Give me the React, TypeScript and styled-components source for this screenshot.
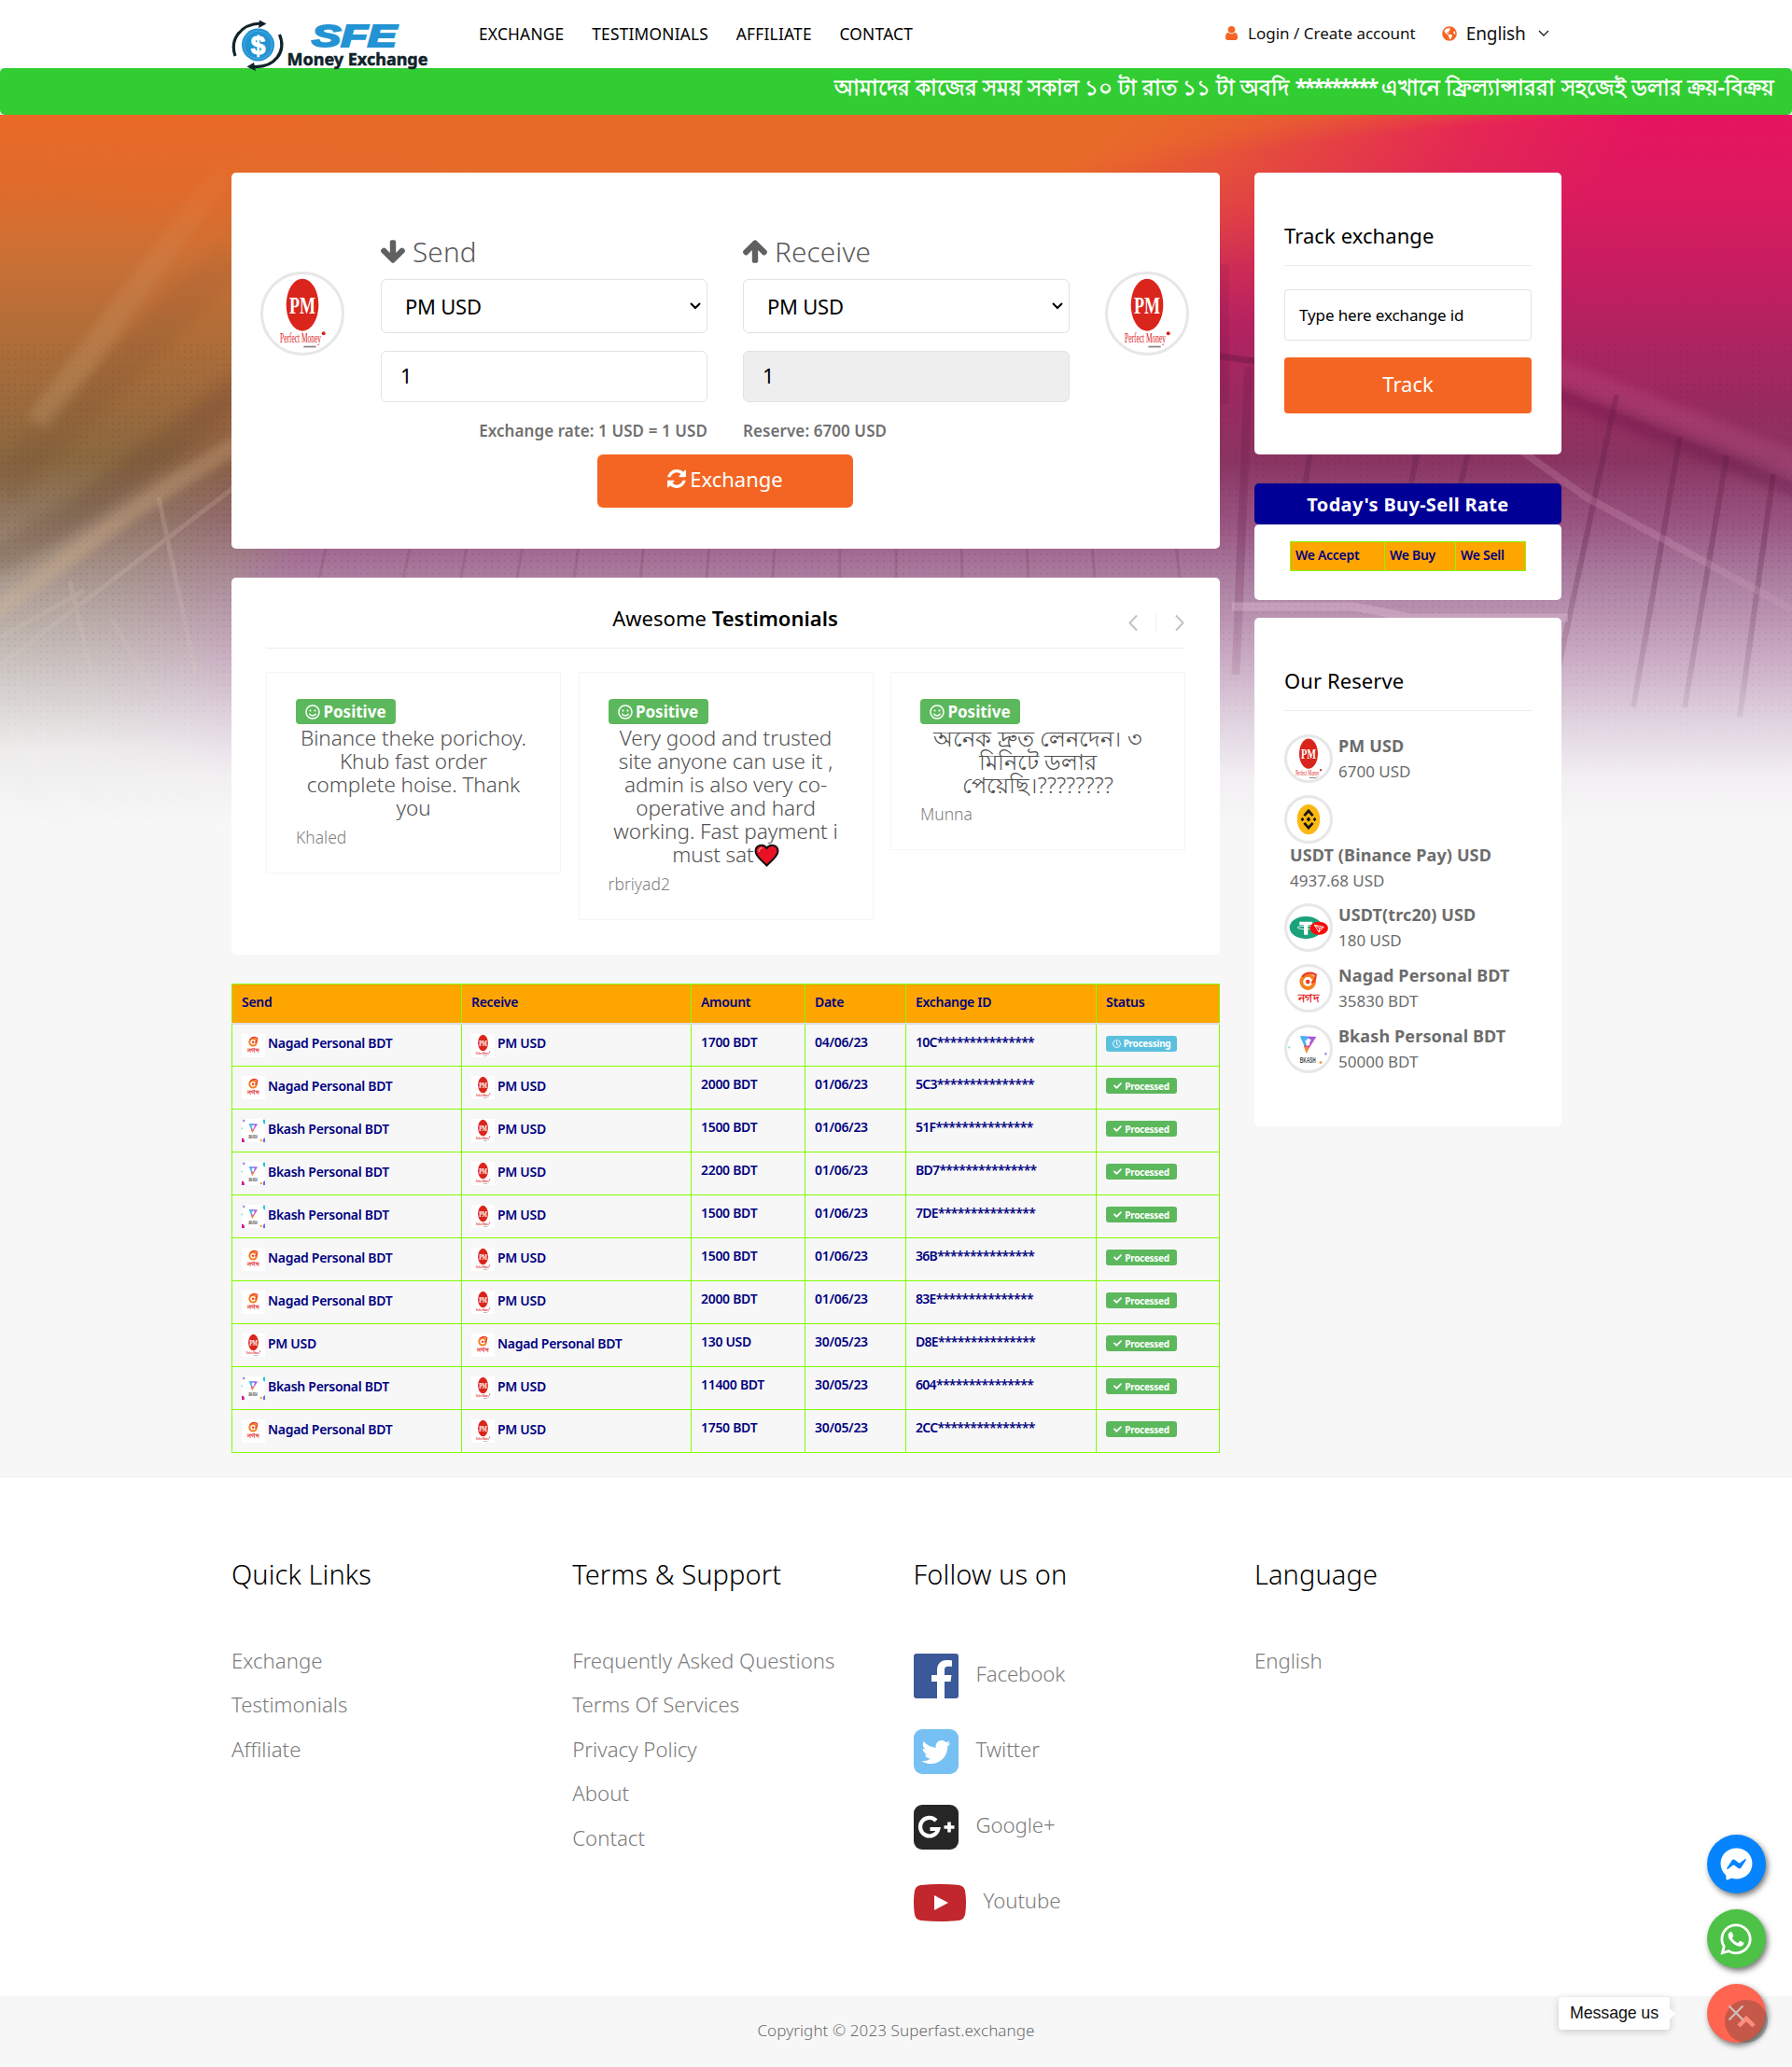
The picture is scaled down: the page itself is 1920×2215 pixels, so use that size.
import React from 'react';
import styled, { createGlobalStyle, css } from 'styled-components';
import { FaCheck, FaFacebookMessenger, FaRegClock, FaRegSmile, FaTwitter, FaWhatsapp, FaGlobeAmericas } from 'react-icons/fa';

const Global = createGlobalStyle`
  *, *::before, *::after { box-sizing: border-box; }
  body { margin: 0; background: #f7f7f7; font-family: "Noto Sans", "Open Sans", sans-serif; color: #6c6c6c; }
  a { color: inherit; text-decoration: none; }
  ul { list-style: none; margin: 0; padding: 0; }
  h2, h3, p { margin: 0; font-weight: inherit; }
  svg { overflow: visible; }
`;

const orange = '#f46523';

/* ---------- page frame ---------- */

const Page = styled.div`
  position: relative;
  width: 1920px;
  height: 2215px;
  overflow: hidden;
  display: flex;
  flex-direction: column;
`;

const Container = styled.div`
  width: 1424px;
  margin-left: 248px;
`;

/* ---------- header ---------- */

const Header = styled.header`
  height: 73px;
  background: #fff;
  position: relative;
  z-index: 2;
`;

const HeaderRow = styled(Container)`
  display: flex;
  align-items: flex-start;
`;

const LogoLink = styled.a`
  width: 265px;
  padding-top: 19px;
  svg { display: block; }
`;

const Nav = styled.nav`
  display: flex;
  gap: 29.7px;
  padding-top: 25px;
  width: 800px;
  font-size: 17.3px;
  line-height: 24px;
  letter-spacing: 0.25px;
  color: #000;
`;

const Account = styled.div`
  display: flex;
  align-items: center;
  padding-top: 23px;
  height: 48px;
  font-size: 17px;
  letter-spacing: 0;
  color: #111;
  white-space: nowrap;
  svg { flex: none; }
`;

const AccountText = styled.span`
  margin: 0 28px 0 11px;
  line-height: 24px;
`;

const Lang = styled.span`
  font-size: 19px;
  line-height: 24px;
  margin: 0 13px 0 10px;
  letter-spacing: -0.1px;
`;

const Ticker = styled.div`
  height: 50px;
  background: #32cd32;
  border-radius: 5px;
  display: flex;
  justify-content: flex-end;
  padding: 2px 19px 0 0;
  color: #fff;
  font-weight: 700;
  font-size: 23.2px;
  line-height: 37px;
  white-space: pre;
  position: relative;
`;

const Stars = styled.span`
  letter-spacing: -2.9px;
  margin-right: 0;
`;

/* ---------- hero backdrop ---------- */

const Main = styled.main`
  position: relative;
  height: 1460px;
  border-bottom: 1px solid #ececec;
`;

const Backdrop = styled.div`
  position: absolute;
  inset: 0 0 auto 0;
  height: 770px;
  background: linear-gradient(180deg, #ea6a28 0, #df6b2b 80px, #cb7035 150px, #a66c3a 270px, #8a6840 370px, #8f7861 430px, #aea096 510px, #d3cecb 610px, #eeedec 680px, #f7f7f7 760px);
`;

const Pink = styled.div`
  position: absolute;
  inset: 0;
  background: linear-gradient(180deg, #e6145f 0, #db1a5f 90px, #bf1f60 190px, #9b2a60 300px, #8a3462 370px, #9a5683 440px, #a97a9d 490px, #c6a5bf 570px, #e0d3e0 650px, #f2eff2 710px, #f7f7f7 760px);
  mask-image: radial-gradient(ellipse 1700px 674px at 1900px 650px, #000 96.5%, rgba(0, 0, 0, 0.5) 100%, rgba(0, 0, 0, 0.15) 106%, transparent 113%);
`;

const Glow = styled.div`
  position: absolute;
  inset: 0;
  background: radial-gradient(ellipse 880px 260px at 880px 0, #e86a29 36%, rgba(232, 106, 41, 0.6) 58%, rgba(232, 106, 41, 0.2) 80%, rgba(232, 106, 41, 0) 100%);
`;

const Texture = styled.svg`
  position: absolute;
  inset: 0;
`;

/* ---------- columns & cards ---------- */

const Columns = styled(Container)`
  position: relative;
  display: flex;
  gap: 37px;
  padding-top: 62px;
`;

const LeftCol = styled.div`
  width: 1059px;
  flex: none;
`;

const RightCol = styled.aside`
  width: 329px;
  margin-right: -1px;
  flex: none;
`;

const Card = styled.section<{ h: number; mb: number; pad?: string }>`
  height: ${p => p.h}px;
  margin-bottom: ${p => p.mb}px;
  padding: ${p => p.pad || '0'};
  background: #fff;
  border-radius: 5px;
`;

/* ---------- exchange form ---------- */

const ExchangeGrid = styled.div`
  display: grid;
  grid-template-columns: 129px 388px 388px 90px;
  margin-left: 31px;
  padding-top: 68px;
`;

const Ring = styled.div<{ d: number }>`
  width: ${p => p.d}px;
  height: ${p => p.d}px;
  border: 3px solid #e7e7e7;
  border-radius: 50%;
  display: flex;
  align-items: center;
  justify-content: center;
  background: #fff;
  flex: none;
`;

const RingCell = styled.div`
  padding-top: 38px;
`;

const FieldCol = styled.div`
  width: 350px;
`;

const FieldTitle = styled.h2`
  display: flex;
  align-items: center;
  gap: 8px;
  height: 46px;
  padding-bottom: 14px;
  font-size: 29.7px;
  font-weight: 300;
  letter-spacing: 0.15px;
  color: #5a5a5a;
`;

const boxed = css`
  width: 100%;
  display: flex;
  align-items: center;
  border: 1px solid #e2e2e2;
  border-radius: 6px;
  color: #000;
`;

const SelectBox = styled.div`
  ${boxed}
  height: 58px;
  padding: 0 6px 0 25px;
  justify-content: space-between;
  font-size: 22px;
  letter-spacing: -0.25px;
  margin-bottom: 19px;
`;

const AmountBox = styled.div<{ muted?: boolean }>`
  ${boxed}
  height: 55px;
  padding: 0 0 3px 20px;
  font-size: 22px;
  background: ${p => (p.muted ? '#eee' : '#fff')};
`;

const RateText = styled.p<{ right?: boolean }>`
  margin-top: 18px;
  line-height: 26px;
  font-size: 17px;
  font-weight: 600;
  letter-spacing: 0.08px;
  text-align: ${p => (p.right ? 'right' : 'left')};
  color: #707070;
`;

const Button = styled.button`
  display: flex;
  align-items: center;
  justify-content: center;
  gap: 4px;
  border: 0;
  padding: 0 0 5px;
  border-radius: 6px;
  background: ${orange};
  color: #fff;
  font-family: inherit;
  font-size: 22px;
`;

const ExchangeButton = styled(Button)`
  width: 274px;
  height: 57px;
  margin: 12px auto 0 392px;
`;

/* ---------- testimonials ---------- */

const TestiHead = styled.div`
  position: relative;
  height: 76px;
  margin: 0 38px 0 37px;
  border-bottom: 1px solid #ececec;
  padding-top: 28px;
  text-align: center;
  font-size: 22px;
  line-height: 30px;
  letter-spacing: 0.03px;
  color: #000;
  b { font-weight: 600; }
`;

const Arrows = styled.div`
  position: absolute;
  right: 0;
  top: 39px;
  svg { display: block; }
`;

const TestiRow = styled.div`
  display: grid;
  grid-template-columns: 316px 316px 316px;
  column-gap: 18.5px;
  align-items: start;
  margin: 25px 0 0 37px;
`;

const TestiCard = styled.article`
  border: 1px solid #f5f5f5;
  padding: 28px 31px 25px;
`;

const Badge = styled.span<{ tone?: string; small?: boolean }>`
  display: inline-flex;
  align-items: center;
  justify-content: center;
  gap: 3px;
  width: ${p => (p.small ? 76 : 107)}px;
  height: ${p => (p.small ? 17 : 27)}px;
  margin-top: ${p => (p.small ? 3 : 0)}px;
  border-radius: ${p => (p.small ? 3 : 4)}px;
  background: ${p => p.tone || '#5cb85c'};
  color: #fff;
  font-weight: 700;
  font-size: ${p => (p.small ? 10 : 17)}px;
  vertical-align: top;
`;

const Quote = styled.p<{ bengali?: boolean }>`
  margin: 2px -10px 0;
  text-align: center;
  font-size: ${p => (p.bengali ? 24 : 22.5)}px;
  line-height: 25px;
  font-weight: 300;
  letter-spacing: ${p => (p.bengali ? 0 : -0.05)}px;
  color: #525252;
  white-space: nowrap;
  span { display: block; height: 25px; }
  svg { vertical-align: -5px; }
`;

const Author = styled.p`
  margin-top: 6px;
  line-height: 26px;
  font-size: 17.5px;
  font-weight: 300;
  color: #808080;
`;

/* ---------- exchanges table ---------- */

const Table = styled.table`
  width: 1059px;
  border-collapse: collapse;
  table-layout: fixed;
  color: navy;
  font-size: 14px;
  font-weight: 600;
  letter-spacing: -0.3px;
  line-height: 20px;
  td, th { border: 1px solid #7fff00; padding: 0 10px; text-align: left; vertical-align: top; font-weight: 600; }
  th { background: orange; height: 42px; padding-top: 9px; border-bottom: 2px solid #ddd; }
  td { height: 46px; padding-top: 9px; }
`;

const Coin = styled.div`
  display: flex;
  align-items: center;
  gap: 3px;
  height: 25px;
  margin-top: 1px;
  padding-bottom: 4px;
  svg { position: relative; top: 2px; flex: none; }
`;

const Id = styled.span`
  letter-spacing: -0.7px;
`;

/* ---------- sidebar ---------- */

const SideTitle = styled.h3<{ h: number }>`
  height: ${p => p.h}px;
  border-bottom: 1px solid #ececec;
  font-size: 22px;
  line-height: 30px;
  letter-spacing: 0.08px;
  color: #000;
`;

const TrackInput = styled.div`
  ${boxed}
  height: 55px;
  margin: 25px 0 18px;
  border-radius: 4px;
  padding: 0 0 1px 15px;
  font-size: 17px;
  letter-spacing: -0.12px;
`;

const TrackButton = styled(Button)`
  width: 265px;
  height: 60px;
  border-radius: 4px;
`;

const RateHeader = styled.div`
  height: 44px;
  border-radius: 5px;
  background: #000096;
  color: #fff;
  text-align: center;
  font-size: 20px;
  line-height: 46px;
  font-weight: 700;
  letter-spacing: 0.33px;
`;

const RateTable = styled.div`
  display: grid;
  grid-template-columns: 101px 76px 1fr;
  width: 253px;
  height: 32px;
  border: 1px solid #7fff00;
  background: orange;
  color: navy;
  font-size: 14px;
  font-weight: 600;
  letter-spacing: -0.3px;
  line-height: 28px;
  span { padding-left: 5px; border-right: 1px solid #7fff00; }
  span:last-child { border-right: 0; }
`;

const ReserveList = styled.ul`
  padding-top: 25px;
`;

const ReserveItem = styled.li<{ wrap?: boolean }>`
  display: flex;
  flex-wrap: ${p => (p.wrap ? 'wrap' : 'nowrap')};
  column-gap: 6px;
  margin-bottom: 13px;
  ${p => p.wrap && css`margin-bottom: 10px; height: 106px;`}
`;

const ReserveText = styled.div<{ wrap?: boolean }>`
  font-size: 17px;
  line-height: 27px;
  margin: ${p => (p.wrap ? '-2px 0 0 6px' : '-1px 0 -1px 0')};
  width: ${p => (p.wrap ? '100%' : 'auto')};
  white-space: nowrap;
  b { display: block; font-size: 18px; font-weight: 700; letter-spacing: 0.12px; }
`;

/* ---------- footer ---------- */

const Footer = styled.footer`
  height: 556px;
  background: #fff;
`;

const FooterGrid = styled(Container)`
  display: grid;
  grid-template-columns: repeat(4, 365.3px);
  padding-top: 84px;
  color: #7c7c7c;
  font-size: 22.2px;
  font-weight: 300;
`;

const FooterTitle = styled.h3`
  color: #000;
  font-size: 29px;
  font-weight: 300;
  letter-spacing: 0.1px;
  line-height: 40px;
  margin-bottom: 50px;
`;

const Links = styled.ul`
  li { height: 47.4px; line-height: 46px; white-space: nowrap; }
`;

const SocialList = styled.div`
  padding-top: 15px;
`;

const Social = styled.a`
  display: flex;
  align-items: center;
  gap: 19px;
  height: 48px;
  margin-bottom: 33px;
  span { padding-bottom: 5px; letter-spacing: -0.1px; }
`;

const Copyright = styled.div`
  height: 76px;
  line-height: 73px;
  text-align: center;
  font-size: 17px;
  font-weight: 300;
  letter-spacing: 0.1px;
  background: #f7f7f7;
`;

/* ---------- floating chat ---------- */

const Floating = styled.div`
  position: absolute;
  right: 28.5px;
  bottom: 26px;
  display: flex;
  flex-direction: column;
  gap: 17px;
`;

const Round = styled.div<{ tone: string }>`
  position: relative;
  width: 63px;
  height: 63px;
  border-radius: 50%;
  display: flex;
  align-items: center;
  justify-content: center;
  background: ${p => p.tone};
  color: #fff;
  box-shadow: 2px 3px 6px rgba(0, 0, 0, 0.55);
`;

const CloseMark = styled.span`
  position: relative;
  z-index: 1;
  display: flex;
  padding-bottom: 2px;
`;

const ToTop = styled.div`
  position: absolute;
  left: 19px;
  top: 17px;
  width: 46px;
  height: 46px;
  border-radius: 50%;
  background: rgba(60, 60, 60, 0.3);
  display: flex;
  align-items: center;
  justify-content: center;
`;

const Tip = styled.div`
  position: absolute;
  right: 131px;
  bottom: 40px;
  width: 119px;
  height: 35px;
  border-radius: 4px;
  background: #fff;
  color: #111;
  text-align: center;
  font: 17.8px/34px "Liberation Sans", Arial, sans-serif;
  letter-spacing: -0.1px;
  box-shadow: 0 2px 10px rgba(0, 0, 0, 0.18);
  &::after {
    content: "";
    position: absolute;
    left: 118px;
    top: 11px;
    border: 7px solid transparent;
    border-left-color: #fff;
    border-right: 0;
  }
`;

/* ---------- drawings ---------- */

const Logo = () => (
  <svg width="214" height="58" viewBox="0 0 214 58">
    <circle cx="28.5" cy="29" r="17.5" fill="#2393d3" />
    <circle cx="28.5" cy="29" r="15" fill="none" stroke="#4dacdf" strokeWidth="1" />
    <text x="28.5" y="39" textAnchor="middle" fontSize="28" fontWeight="700" fill="#fff" stroke="#fff" fontFamily="Liberation Sans, Arial, sans-serif">$</text>
    <g fill="none" stroke="#10232b" strokeWidth="3.2">
      <path d="M4 41C-2 24 9 7 31 6" />
      <path d="M51.500 18C59 36 47 54 23 52.500" />
    </g>
    <path d="M30 2.500l7.500 4L29 11zM24 48l-7.500 4.500L26 57z" fill="#10232b" />
    <text x="86" y="31" fontSize="33" fontWeight="700" fontStyle="italic" fill="#2393d3" stroke="#2393d3" strokeWidth="2" textLength="91" lengthAdjust="spacingAndGlyphs" fontFamily="Liberation Sans, Arial, sans-serif">SFE</text>
    <text x="59.5" y="51" fontSize="18" fontWeight="700" fill="#10232b" stroke="#10232b" strokeWidth=".5" textLength="151" lengthAdjust="spacingAndGlyphs" fontFamily="Noto Sans, sans-serif">Money Exchange</text>
  </svg>
);

const UserIcon = () => (
  <svg width="13" height="15" viewBox="256 128 1280 1536" preserveAspectRatio="none" fill={orange}>
    <path d="M1536 1399q0 109-62.500 187t-150.500 78h-854q-88 0-150.500-78t-62.500-187q0-85 8.500-160.500t31.500-152 58.500-131 94-89 134.500-34.500q131 128 313 128t313-128q76 0 134.500 34.500t94 89 58.500 131 31.500 152 8.500 160.500zm-256-887q0 159-112.500 271.500t-271.500 112.500-271.500-112.500-112.500-271.500 112.500-271.500 271.500-112.500 271.500 112.500 112.500 271.500z" />
  </svg>
);

const RefreshIcon = () => (
  <svg width="20" height="20" viewBox="128 128 1536 1536" fill="#fff">
    <path d="M1639 1056q0 5-1 7-64 268-268 434.500t-478 166.500q-146 0-282.500-55t-243.500-157l-129 129q-19 19-45 19t-45-19-19-45v-448q0-26 19-45t45-19h448q26 0 45 19t19 45-19 45l-137 137q71 66 161 102t187 36q134 0 250-65t186-179q11-17 53-117 8-23 30-23h192q13 0 22.500 9.500t9.500 22.500zm25-800v448q0 26-19 45t-45 19h-448q-26 0-45-19t-19-45 19-45l138-138q-148-137-349-137-134 0-250 65t-186 179q-11 17-53 117-8 23-30 23h-199q-13 0-22.500-9.500t-9.500-22.500v-7q65-268 270-434.500t480-166.500q146 0 284 55.500t245 156.500l130-129q19-19 45-19t45 19 19 45z" />
  </svg>
);

const ArrowIcon = ({ up }: { up?: boolean }) => (
  <svg width="26" height="25" viewBox="117 128 1558 1483" fill="#606060">
    <path
      transform={up ? 'rotate(180 896 869.5)' : undefined}
      d="M1675 832q0 53-37 90l-651 652q-39 37-91 37-53 0-90-37l-651-652q-38-36-38-90 0-53 38-91l74-75q39-37 91-37 53 0 90 37l294 294v-704q0-52 38-90t90-38h128q52 0 90 38t38 90v704l294-294q37-37 90-37 52 0 91 37l75 75q37 39 37 91z"
    />
  </svg>
);

const Chevron = ({ w, h, d, color, sw }: { w: number; h: number; d: string; color: string; sw: number }) => (
  <svg width={w} height={h} viewBox={`0 0 ${w} ${h}`} fill="none" stroke={color} strokeWidth={sw}>
    <path d={d} />
  </svg>
);

const Heart = () => (
  <svg width="27" height="25" viewBox="0 0 27 25">
    <path d="M13.500 23.500C8 18 1.500 13.500 1.500 8 1.500 1.500 10 -.5 13.500 5 17 -.5 25.500 1.500 25.500 8c0 5.500-6.500 10-12 15.500z" fill="#e81224" stroke="#111" strokeWidth="2" />
    <path d="M5 9c0-3 2-4.500 4-4" stroke="#f4706f" strokeWidth="1.800" fill="none" />
  </svg>
);

type CoinName = 'pm' | 'binance' | 'usdt' | 'nagad' | 'bkash';

const CoinArt = ({ name, size, tile }: { name: CoinName; size: number; tile?: boolean }) => (
  <svg width={size} height={size} viewBox="0 0 60 60">
    {tile && <rect width="60" height="60" fill="#fff" />}
    {name === 'pm' && (
      <>
        <ellipse cx="30" cy="23" rx="13" ry="21" fill="#da251c" />
        <text x="30" y="30" textAnchor="middle" fontSize="19" fontWeight="700" fill="#fff" textLength="21" lengthAdjust="spacingAndGlyphs" fontFamily="Liberation Serif, serif">PM</text>
        <text x="12" y="53" fontSize="10.5" fill="#da251c" textLength="33" lengthAdjust="spacingAndGlyphs" fontFamily="Liberation Serif, serif">Perfect Money</text>
        <circle cx="47" cy="46" r="1.500" fill="#da251c" />
        <rect x="31" y="56" width="10" height="1.300" fill="#888" />
      </>
    )}
    {name === 'binance' && (
      <>
        <ellipse cx="30" cy="30" rx="16" ry="21" fill="#fcb813" />
        <g fill="none" stroke="#161616" strokeWidth="3.600">
          <path d="M24 25l6-7 6 7M24 35l6 7 6-7" />
        </g>
        <path d="M30 26.500l3 3.500-3 3.500-3-3.500zM21.500 27l2.500 3-2.500 3-2.500-3zM38.500 27l2.500 3-2.500 3-2.500-3z" fill="#161616" />
      </>
    )}
    {name === 'usdt' && (
      <>
        <ellipse cx="26" cy="30" rx="25" ry="17" fill="#1ba27a" />
        <path d="M16 21h20v5h-7v15h-6V26h-7z" fill="#fff" />
        <ellipse cx="26" cy="30" rx="13" ry="2.500" fill="none" stroke="#fff" strokeWidth="1.200" />
        <ellipse cx="46" cy="31" rx="14" ry="10" fill="#fb0b0b" />
        <path d="M39 26l14 3-7 8zM39 26l8 5 6-2M47 31l-1 6" fill="none" stroke="#fff" strokeWidth="1.300" />
      </>
    )}
    {name === 'nagad' && (
      <>
        <circle cx="29" cy="21" r="9" fill="none" stroke="#f58220" strokeWidth="5" />
        <path d="M21 14c6-7 14-6 19-3 0 6-2 10-6 11" fill="none" stroke="#ee3c26" strokeWidth="3" />
        <circle cx="29" cy="21" r="3" fill="#ee3c26" />
        <text x="30" y="49" textAnchor="middle" fontSize="17" fontWeight="700" fill="#e5282a" textLength="30" lengthAdjust="spacingAndGlyphs">নগদ</text>
      </>
    )}
    {name === 'bkash' && (
      <>
        <path d="M18 12l23 1-10 13 1-10z" fill="#a55be0" />
        <path d="M18 12l11 1-3 17z" fill="#45b4ee" />
        <path d="M41 13L27 35l-4-10 8 0z" fill="#d64ea4" />
        <path d="M24 27l7 1-4 9z" fill="#f58b2c" />
        <path d="M25 18l9-1-6 9z" fill="#fff" />
        <text x="29" y="50" textAnchor="middle" fontSize="11" fontWeight="700" fill="#444" textLength="22" lengthAdjust="spacingAndGlyphs" fontFamily="Liberation Sans, sans-serif">BKASH</text>
        {tile ? (
          <>
            <path d="M2 2h6v6H3z" fill="#9a8df0" />
            <path d="M55 2h5v12l-5-4z" fill="#22c6d4" />
            <path d="M0 50h4l3 5v5H0z" fill="#cc1f9c" />
            <circle cx="50" cy="55" r="3" fill="#f3a73c" />
            <path d="M55 52l5-4v12h-5z" fill="#6f6ae8" />
            <circle cx="1" cy="25" r="2" fill="#7fe0d8" />
          </>
        ) : (
          <>
            <circle cx="3" cy="28" r="1.500" fill="#7fe0d8" />
            <circle cx="54" cy="37" r="1.700" fill="#a58df0" />
            <circle cx="47" cy="49" r="2" fill="#f3a73c" />
          </>
        )}
      </>
    )}
  </svg>
);

const FacebookArt = () => (
  <svg width="48" height="48" viewBox="0 0 48 48">
    <rect width="48" height="48" rx="3" fill="#3b5998" />
    <path d="M25 48V30h-6v-7h6v-5c0-7 4-11 10-11 3 0 5 .2 6 .4v6.300h-4c-3.200 0-4 1.600-4 4V23h7.500l-1 7H33v18z" fill="#fff" />
  </svg>
);

const TwitterArt = () => (
  <svg width="48" height="48" viewBox="0 0 48 48">
    <rect width="48" height="48" rx="9" fill="#76c0f3" />
    <FaTwitter x="8.5" y="9" size={31} color="#fff" />
  </svg>
);

const GoogleArt = () => (
  <svg width="48" height="48" viewBox="0 0 48 48">
    <rect width="48" height="48" rx="9" fill="#262626" />
    <path d="M24 17a9.800 9.800 0 1 0 2.300 9H17.500" fill="none" stroke="#fff" strokeWidth="4.200" />
    <path d="M38 18.500v11M32.500 24h11" stroke="#fff" strokeWidth="3.600" />
  </svg>
);

const YoutubeArt = () => (
  <svg width="56" height="40" viewBox="0 0 56 40">
    <path d="M8 1Q28-1 48 1q6.500.5 7.300 8 1.400 11 0 22-.8 7.500-7.300 8-20 2-40 0-6.500-.5-7.300-8-1.400-11 0-22Q1.500 1.500 8 1z" fill="#c1272d" />
    <path d="M22 12v16l15-8z" fill="#fff" />
  </svg>
);

const CartLines = () => (
  <Texture width="1920" height="770" viewBox="0 0 1920 770">
    <defs>
      <pattern id="dots" width="7" height="7" patternUnits="userSpaceOnUse">
        <circle cx="2" cy="2" r="1" fill="#2b0820" opacity=".13" />
      </pattern>
      <linearGradient id="fade" x1="0" y1="0" x2="0" y2="1">
        <stop offset="0" stopColor="#fff" stopOpacity="0" />
        <stop offset=".35" stopColor="#fff" stopOpacity=".8" />
        <stop offset=".6" stopColor="#fff" />
        <stop offset=".92" stopColor="#fff" stopOpacity="0" />
      </linearGradient>
      <mask id="m"><rect width="1920" height="770" fill="url(#fade)" /></mask>
      <filter id="soft"><feGaussianBlur stdDeviation="5" /></filter>
    </defs>
    <g mask="url(#m)" fill="none">
      <rect y="240" width="1920" height="430" fill="url(#dots)" />
      <g filter="url(#soft)">
        <path d="M40 330L240 60" stroke="#f3d3a4" strokeOpacity=".18" strokeWidth="26" />
        <path d="M0 400L250 150" stroke="#6b4322" strokeOpacity=".16" strokeWidth="40" />
        <path d="M-10 535C70 480 130 425 260 350" stroke="#ecc79a" strokeOpacity=".28" strokeWidth="20" />
        <path d="M-10 480C70 440 160 370 260 290" stroke="#5a3b22" strokeOpacity=".2" strokeWidth="30" />
        <path d="M1660 270L1930 375" stroke="#e070a0" strokeOpacity=".2" strokeWidth="24" />
        <path d="M1660 295L1930 405" stroke="#4d1238" strokeOpacity=".26" strokeWidth="16" />
      </g>
      <path d="M0 590L250 400M0 560l90-50M75 500l35 150M170 410l40 190M120 540l60 110" stroke="#f4e3cf" strokeOpacity=".16" strokeWidth="5" />
      <path d="M1300 258l60 8" stroke="#4d1238" strokeOpacity=".4" strokeWidth="7" />
      <path d="M1312 160v150M1338 270l-14 330" stroke="#5c1440" strokeOpacity=".22" strokeWidth="9" />
      <path d="M1405 355l-10 60M1520 355l-12 60M1575 355l-15 60M1732 300l-70 330M1800 345l-50 290M1850 365l-45 270M1900 385l-36 260" stroke="#4d1238" strokeOpacity=".26" strokeWidth="6" />
      <path d="M1630 360l70 50 220 120" stroke="#e7b3cf" strokeOpacity=".2" strokeWidth="8" />
      <path d="M350 462l-8 34M440 462l-8 34M500 462l-6 34M560 462l-6 34M620 462l-5 34M690 462l-4 34M760 462l-3 34M830 462l-2 34M900 462v34M960 462v34M1030 462l1 34M1100 462l2 34M1170 462l3 34M1260 462l4 34" stroke="#4d1238" strokeOpacity=".14" strokeWidth="3" />
      <path d="M1320 527h130q30 5 60 12h170" stroke="#f2d3e6" strokeOpacity=".35" strokeWidth="9" />
    </g>
  </Texture>
);

/* ---------- data ---------- */

const coinLabel: Record<CoinName, string> = {
  pm: 'PM USD', binance: 'USDT (Binance Pay) USD', usdt: 'USDT(trc20) USD', nagad: 'Nagad Personal BDT', bkash: 'Bkash Personal BDT',
};

const reserves: [CoinName, string][] = [
  ['pm', '6700 USD'], ['binance', '4937.68 USD'], ['usdt', '180 USD'], ['nagad', '35830 BDT'], ['bkash', '50000 BDT'],
];

const exchanges: [CoinName, CoinName, string, string, string][] = [
  ['nagad', 'pm', '1700 BDT', '04/06/23', '10C'],
  ['nagad', 'pm', '2000 BDT', '01/06/23', '5C3'],
  ['bkash', 'pm', '1500 BDT', '01/06/23', '51F'],
  ['bkash', 'pm', '2200 BDT', '01/06/23', 'BD7'],
  ['bkash', 'pm', '1500 BDT', '01/06/23', '7DE'],
  ['nagad', 'pm', '1500 BDT', '01/06/23', '36B'],
  ['nagad', 'pm', '2000 BDT', '01/06/23', '83E'],
  ['pm', 'nagad', '130 USD', '30/05/23', 'D8E'],
  ['bkash', 'pm', '11400 BDT', '30/05/23', '604'],
  ['nagad', 'pm', '1750 BDT', '30/05/23', '2CC'],
];

type Testimonial = { lines: string[]; who: string; heart?: boolean; bengali?: boolean };

const testimonials: Testimonial[] = [
  { lines: ['Binance theke porichoy.', 'Khub fast order', 'complete hoise. Thank', 'you'], who: 'Khaled' },
  { lines: ['Very good and trusted', 'site anyone can use it ,', 'admin is also very co-', 'operative and hard', 'working. Fast payment i', 'must sat'], who: 'rbriyad2', heart: true },
  { lines: ['অনেক দ্রুত লেনদেন। ৩', 'মিনিটে ডলার', 'পেয়েছি।????????'], who: 'Munna', bengali: true },
];

/* ---------- page ---------- */

export default function App() {
  return (
    <Page>
      <Global />
      <Header>
        <HeaderRow>
          <LogoLink href="#"><Logo /></LogoLink>
          <Nav>
            <a href="#">EXCHANGE</a>
            <a href="#">TESTIMONIALS</a>
            <a href="#">AFFILIATE</a>
            <a href="#">CONTACT</a>
          </Nav>
          <Account>
            <UserIcon />
            <AccountText>Login / Create account</AccountText>
            <FaGlobeAmericas size={16} color={orange} />
            <Lang>English</Lang>
            <Chevron w={12} h={8} d="M1 1l5 5 5-5" color="#222" sw={1.4} />
          </Account>
        </HeaderRow>
      </Header>
      <Ticker>আমাদের কাজের সময় সকাল ১০ টা রাত ১১ টা অবদি <Stars>*********</Stars> এখানে ফ্রিল্যান্সাররা সহজেই ডলার ক্রয়-বিক্রয়</Ticker>

      <Main>
        <Backdrop><Pink /><Glow /><CartLines /></Backdrop>
        <Columns>
          <LeftCol>
            <Card h={403} mb={31}>
              <ExchangeGrid>
                <RingCell><Ring d={90}><CoinArt name="pm" size={80} /></Ring></RingCell>
                <FieldCol>
                  <FieldTitle><ArrowIcon />Send</FieldTitle>
                  <SelectBox>PM USD<Chevron w={12} h={8} d="M1 1l5 5 5-5" color="#000" sw={2} /></SelectBox>
                  <AmountBox>1</AmountBox>
                  <RateText right>Exchange rate: 1 USD = 1 USD</RateText>
                </FieldCol>
                <FieldCol>
                  <FieldTitle><ArrowIcon up />Receive</FieldTitle>
                  <SelectBox>PM USD<Chevron w={12} h={8} d="M1 1l5 5 5-5" color="#000" sw={2} /></SelectBox>
                  <AmountBox muted>1</AmountBox>
                  <RateText>Reserve: 6700 USD</RateText>
                </FieldCol>
                <RingCell><Ring d={90}><CoinArt name="pm" size={80} /></Ring></RingCell>
              </ExchangeGrid>
              <ExchangeButton><RefreshIcon />Exchange</ExchangeButton>
            </Card>

            <Card h={404} mb={31}>
              <TestiHead>
                Awesome <b>Testimonials</b>
                <Arrows>
                  <svg width="60" height="19" viewBox="0 0 60 19" fill="none" stroke="#c4c4c4" strokeWidth="2">
                    <path d="M9 1.500L1.500 9.500 9 17.500M51 1.500l7.500 8-7.500 8" />
                    <path d="M29.500 0v19" stroke="#eee" strokeWidth="1" />
                  </svg>
                </Arrows>
              </TestiHead>
              <TestiRow>
                {testimonials.map(t => (
                  <TestiCard key={t.who}>
                    <Badge><FaRegSmile size={16} />Positive</Badge>
                    <Quote bengali={t.bengali}>
                      {t.lines.map((l, i) => (
                        <span key={l}>{l}{t.heart && i === t.lines.length - 1 && <Heart />}</span>
                      ))}
                    </Quote>
                    <Author>{t.who}</Author>
                  </TestiCard>
                ))}
              </TestiRow>
            </Card>

            <Table>
              <colgroup>
                <col width="246" /><col width="246" /><col width="122" /><col width="108" /><col width="204" /><col width="132" />
              </colgroup>
              <thead>
                <tr><th>Send</th><th>Receive</th><th>Amount</th><th>Date</th><th>Exchange ID</th><th>Status</th></tr>
              </thead>
              <tbody>
                {exchanges.map(([from, to, amount, date, id], i) => (
                  <tr key={id}>
                    <td><Coin><CoinArt name={from} size={25} tile />{coinLabel[from]}</Coin></td>
                    <td><Coin><CoinArt name={to} size={25} tile />{coinLabel[to]}</Coin></td>
                    <td>{amount}</td>
                    <td>{date}</td>
                    <td><Id>{id}***************</Id></td>
                    <td>
                      {i === 0
                        ? <Badge small tone="#5bc0de"><FaRegClock size={9} />Processing</Badge>
                        : <Badge small><FaCheck size={9} />Processed</Badge>}
                    </td>
                  </tr>
                ))}
              </tbody>
            </Table>
          </LeftCol>

          <RightCol>
            <Card h={302} mb={31} pad="52px 32px 0">
              <SideTitle h={48}>Track exchange</SideTitle>
              <TrackInput>Type here exchange id</TrackInput>
              <TrackButton>Track</TrackButton>
            </Card>
            <RateHeader>Today's Buy-Sell Rate</RateHeader>
            <Card h={81} mb={19} pad="18px 38px 0">
              <RateTable><span>We Accept</span><span>We Buy</span><span>We Sell</span></RateTable>
            </Card>
            <Card h={545} mb={0} pad="52px 32px 0">
              <SideTitle h={48}>Our Reserve</SideTitle>
              <ReserveList>
                {reserves.map(([coin, amount]) => (
                  <ReserveItem key={coin} wrap={coin === 'binance'}>
                    <Ring d={52}><CoinArt name={coin} size={coin === 'usdt' ? 42 : 46} /></Ring>
                    <ReserveText wrap={coin === 'binance'}><b>{coinLabel[coin]}</b>{amount}</ReserveText>
                  </ReserveItem>
                ))}
              </ReserveList>
            </Card>
          </RightCol>
        </Columns>
      </Main>

      <Footer>
        <FooterGrid>
          <div>
            <FooterTitle>Quick Links</FooterTitle>
            <Links><li>Exchange</li><li>Testimonials</li><li>Affiliate</li></Links>
          </div>
          <div>
            <FooterTitle>Terms &amp; Support</FooterTitle>
            <Links><li>Frequently Asked Questions</li><li>Terms Of Services</li><li>Privacy Policy</li><li>About</li><li>Contact</li></Links>
          </div>
          <div>
            <FooterTitle>Follow us on</FooterTitle>
            <SocialList>
              <Social href="#"><FacebookArt /><span>Facebook</span></Social>
              <Social href="#"><TwitterArt /><span>Twitter</span></Social>
              <Social href="#"><GoogleArt /><span>Google+</span></Social>
              <Social href="#"><YoutubeArt /><span>Youtube</span></Social>
            </SocialList>
          </div>
          <div>
            <FooterTitle>Language</FooterTitle>
            <Links><li>English</li></Links>
          </div>
        </FooterGrid>
      </Footer>
      <Copyright>Copyright © 2023 Superfast.exchange</Copyright>

      <Tip>Message us</Tip>
      <Floating>
        <Round tone="#0584fe"><FaFacebookMessenger size={35} /></Round>
        <Round tone="#4dc247"><FaWhatsapp size={38} /></Round>
        <Round tone="#ff6550">
          <CloseMark>
            <Chevron w={18} h={18} d="M1.500 1.500l15 15M16.500 1.500l-15 15" color="#cfc0bd" sw={2.2} />
          </CloseMark>
          <ToTop>
            <svg width="20" height="13" viewBox="0 0 20 13" fill="none" stroke="#ff8d7e" strokeWidth="4.5">
              <path d="M2 11l8-8 8 8" />
            </svg>
          </ToTop>
        </Round>
      </Floating>
    </Page>
  );
}
